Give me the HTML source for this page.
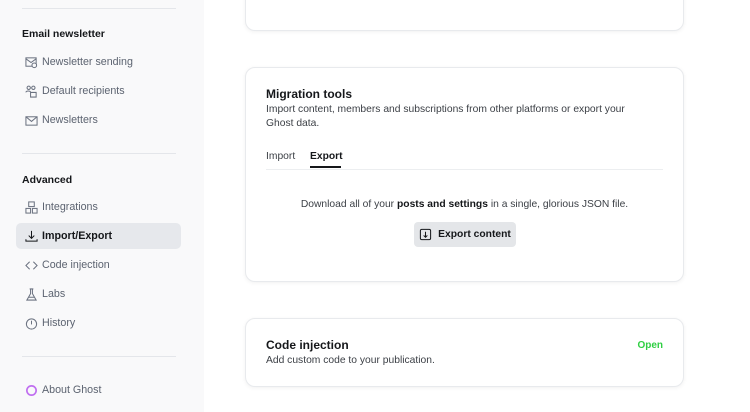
<!DOCTYPE html><html><head><style>
*{box-sizing:border-box;margin:0;padding:0}
body{width:750px;height:412px;overflow:hidden;background:#fff;font-family:"Liberation Sans",sans-serif;position:relative;color:#15171a}
.side{position:absolute;left:0;top:0;width:204px;height:412px;background:#f9f9fa}
.hr{position:absolute;left:22px;width:154px;height:1px;background:#e4e6ea}
.h{position:absolute;left:22px;font-size:10.5px;font-weight:bold;color:#15171a}
.it{position:absolute;left:16px;width:165px;height:26px;border-radius:5px;font-size:10.7px;color:#5c6370;display:flex;align-items:center;padding-left:9px}
.it svg{width:13px;height:13px;margin-right:4px;fill:none;stroke:#6b7280;stroke-width:1.1}
.it.a{background:#e6e8ec;color:#15171a;font-weight:bold}
.it.a svg{stroke:#15171a}
.card{position:absolute;left:245px;width:439px;border:1px solid #e8eaed;border-radius:10px;background:#fff;box-shadow:0 1px 4px rgba(0,0,0,.06)}
.t{font-size:12px;font-weight:bold;position:absolute;left:20px}
.d{font-size:10.3px;color:#3b3f45;position:absolute;left:20px;line-height:14px}
</style></head><body>
<div class="side">
<div class="hr" style="top:8px"></div>
<div class="h" style="top:28px">Email newsletter</div>
<div class="it" style="top:49px"><svg viewBox="0 0 14 14"><rect x="1" y="2" width="11" height="9"/><path d="M1 3l5.5 4L12 3"/><circle cx="10" cy="10" r="2.5" fill="#f9f9fa"/></svg>Newsletter sending</div>
<div class="it" style="top:78px"><svg viewBox="0 0 14 14"><circle cx="4" cy="3" r="1.8"/><circle cx="9" cy="3" r="1.8"/><path d="M1 8c0-2 5-2 5 0M6 8h6v5H6z"/></svg>Default recipients</div>
<div class="it" style="top:107px"><svg viewBox="0 0 14 14"><rect x="1" y="3" width="12" height="9"/><path d="M1 3l6 5 6-5"/></svg>Newsletters</div>
<div class="hr" style="top:153px"></div>
<div class="h" style="top:174px">Advanced</div>
<div class="it" style="top:194px"><svg viewBox="0 0 14 14"><rect x="4" y="1" width="6" height="5"/><rect x="1" y="8" width="5" height="5"/><rect x="8" y="8" width="5" height="5"/></svg>Integrations</div>
<div class="it a" style="top:223px"><svg viewBox="0 0 14 14"><path d="M7 1v8M4 6l3 3 3-3M1 10v2h12v-2"/></svg>Import/Export</div>
<div class="it" style="top:252px"><svg viewBox="0 0 14 14"><path d="M5 3L1 7l4 4M9 3l4 4-4 4"/></svg>Code injection</div>
<div class="it" style="top:281px"><svg viewBox="0 0 14 14"><path d="M5 1h4M6 1v5L2 13h10L8 6V1M3.5 10h7"/></svg>Labs</div>
<div class="it" style="top:310px"><svg viewBox="0 0 14 14"><circle cx="7" cy="7.5" r="5.5"/><path d="M7 4v4"/></svg>History</div>
<div class="hr" style="top:356px"></div>
<div class="it" style="top:377px"><svg viewBox="0 0 14 14" style="stroke:#c06ef0;stroke-width:1.8"><circle cx="7" cy="7" r="5"/></svg>About Ghost</div>
</div>
<div class="card" style="top:-20px;height:51px"></div>
<div class="card" style="top:67px;height:215px">
<div class="t" style="top:19px">Migration tools</div>
<div class="d" style="top:35px;width:380px">Import content, members and subscriptions from other platforms or export your Ghost data.</div>
<div style="position:absolute;left:20px;top:83px;font-size:10.3px;color:#3b3f45">Import</div>
<div style="position:absolute;left:64px;top:83px;font-size:10.3px;font-weight:bold">Export</div>
<div style="position:absolute;left:64px;top:98px;width:31px;height:2px;background:#15171a"></div>
<div style="position:absolute;left:20px;top:101px;width:397px;height:1px;background:#eceef0"></div>
<div style="position:absolute;left:0;width:437px;top:131px;text-align:center;font-size:10.3px;color:#3b3f45">Download all of your <b style="color:#15171a">posts and settings</b> in a single, glorious JSON file.</div>
<div style="position:absolute;left:168px;top:154px;width:102px;height:25px;background:#e4e6e9;border-radius:4px;font-size:10.3px;font-weight:bold;display:flex;align-items:center;justify-content:center;gap:6px"><svg width="13" height="13" viewBox="0 0 14 14" fill="none" stroke="#15171a" stroke-width="1.1"><rect x="1.5" y="1.5" width="11" height="11" rx="1.5"/><path d="M7 4v6M5 8l2 2 2-2"/></svg>Export content</div>
</div>
<div class="card" style="top:318px;height:69px">
<div class="t" style="top:19px">Code injection</div>
<div class="d" style="top:35px">Add custom code to your publication.</div>
<div style="position:absolute;right:20px;top:21px;font-size:10px;font-weight:bold;color:#30cf43">Open</div>
</div>
</body></html>
